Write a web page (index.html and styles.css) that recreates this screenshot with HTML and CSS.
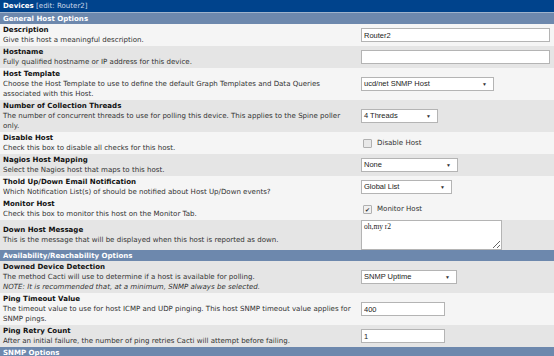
FILE: index.html
```html
<!DOCTYPE html>
<html lang="en">
<head>
    <meta charset="UTF-8">
    <title>Devices - edit Router2</title>
    <link rel="stylesheet" href="styles.css">
</head>
<body>
    <table class="form-table">
        <colgroup>
            <col class="col-label">
            <col class="col-field">
        </colgroup>
        <tr class="page-head">
            <td colspan="2"><b>Devices</b> <span class="sub">[edit: Router2]</span></td>
        </tr>
        <tr class="section">
            <td colspan="2">General Host Options</td>
        </tr>
        <tr class="row-light">
            <td><div class="title">Description</div>Give this host a meaningful description.</td>
            <td><input class="txt wide" type="text" value="Router2"></td>
        </tr>
        <tr class="row-dark">
            <td><div class="title">Hostname</div>Fully qualified hostname or IP address for this device.</td>
            <td><input class="txt wide" type="text" value=""></td>
        </tr>
        <tr class="row-light">
            <td><div class="title">Host Template</div>Choose the Host Template to use to define the default Graph Templates and Data Queries associated with this Host.</td>
            <td><span class="sel w132">ucd/net SNMP Host</span></td>
        </tr>
        <tr class="row-dark">
            <td><div class="title">Number of Collection Threads</div>The number of concurrent threads to use for polling this device. This applies to the Spine poller only.</td>
            <td><span class="sel w76">4 Threads</span></td>
        </tr>
        <tr class="row-light">
            <td><div class="title">Disable Host</div>Check this box to disable all checks for this host.</td>
            <td><label class="chk"><span class="box"></span>Disable Host</label></td>
        </tr>
        <tr class="row-dark">
            <td><div class="title">Nagios Host Mapping</div>Select the Nagios host that maps to this host.</td>
            <td><span class="sel w96">None</span></td>
        </tr>
        <tr class="row-light">
            <td><div class="title">Thold Up/Down Email Notification</div>Which Notification List(s) of should be notified about Host Up/Down events?</td>
            <td><span class="sel w90">Global List</span></td>
        </tr>
        <tr class="row-light">
            <td><div class="title">Monitor Host</div>Check this box to monitor this host on the Monitor Tab.</td>
            <td><label class="chk"><span class="box checked">&#10004;</span>Monitor Host</label></td>
        </tr>
        <tr class="row-dark">
            <td><div class="title">Down Host Message</div>This is the message that will be displayed when this host is reported as down.</td>
            <td><textarea class="msg">oh,my r2</textarea></td>
        </tr>
        <tr class="section">
            <td colspan="2">Availability/Reachability Options</td>
        </tr>
        <tr class="row-dark">
            <td><div class="title">Downed Device Detection</div>The method Cacti will use to determine if a host is available for polling.<br><i>NOTE: It is recommended that, at a minimum, SNMP always be selected.</i></td>
            <td><span class="sel w95">SNMP Uptime</span></td>
        </tr>
        <tr class="row-light">
            <td><div class="title">Ping Timeout Value</div>The timeout value to use for host ICMP and UDP pinging. This host SNMP timeout value applies for SNMP pings.</td>
            <td><input class="txt short" type="text" value="400"></td>
        </tr>
        <tr class="row-dark">
            <td><div class="title">Ping Retry Count</div>After an initial failure, the number of ping retries Cacti will attempt before failing.</td>
            <td><input class="txt short" type="text" value="1"></td>
        </tr>
        <tr class="section">
            <td colspan="2">SNMP Options</td>
        </tr>
    </table>
</body>
</html>
```

FILE: styles.css
```css
body {
    margin: 0;
    background-color: #ffffff;
    font-family: 'DejaVu Sans', Verdana, sans-serif;
    font-size: 7.05px;
    color: #333333;
}
.form-table {
    width: 554px;
    table-layout: fixed;
    border-collapse: collapse;
}
.col-label {
    width: 358px;
}
.form-table td {
    padding: 1px 3px;
    line-height: 10px;
    vertical-align: middle;
}
.page-head td {
    background-color: #00438c;
    color: #ffffff;
    height: 10px;
    line-height: 11px;
    padding: 0 3px 1px;
    border-bottom: 1px solid #9fb3cc;
}
.page-head .sub {
    color: #c9d6e8;
}
.section td {
    background-color: #6d88ad;
    color: #ffffff;
    font-weight: bold;
    height: 11px;
    line-height: 11px;
    padding: 0 3px;
}
.row-light td {
    background-color: #f5f5f5;
}
.row-dark td {
    background-color: #e5e5e5;
}
.title {
    font-weight: bold;
    color: #111111;
}
.txt {
    box-sizing: border-box;
    height: 14px;
    padding: 0 2px;
    border: 1px solid #b4b4b4;
    background-color: #ffffff;
    font-family: 'Liberation Sans', Arial, sans-serif;
    font-size: 7.5px;
    color: #222222;
    display: block;
}
.wide {
    width: 189px;
}
.short {
    width: 84px;
}
.sel {
    box-sizing: border-box;
    display: block;
    position: relative;
    height: 14px;
    line-height: 12px;
    padding: 0 2px;
    border: 1px solid #b4b4b4;
    background-color: #ffffff;
    font-family: 'Liberation Sans', Arial, sans-serif;
    font-size: 7.5px;
    color: #222222;
}
.sel::after {
    content: "\25BC";
    position: absolute;
    right: 6px;
    top: 0;
    font-size: 5px;
    color: #333333;
}
.w132 { width: 133px; }
.w76 { width: 77px; }
.w96 { width: 97px; }
.w90 { width: 91px; }
.w95 { width: 96px; }
.chk {
    display: flex;
    align-items: center;
    gap: 5px;
    padding-left: 2px;
    color: #333333;
}
.box {
    box-sizing: border-box;
    width: 9px;
    height: 9px;
    border: 1px solid #b0b0b0;
    background-color: #e8e8e8;
    border-radius: 1px;
    font-size: 6px;
    line-height: 7px;
    text-align: center;
    color: #333333;
}
.box.checked {
    background-color: #f0f0f0;
}
.msg {
    box-sizing: border-box;
    display: block;
    width: 141px;
    height: 30px;
    margin: -1px 0;
    padding: 1px 2px;
    border: 1px solid #b4b4b4;
    background-color: #ffffff;
    font-family: 'Liberation Serif', 'Times New Roman', serif;
    font-size: 7.5px;
    color: #222222;
    resize: vertical;
}
```
